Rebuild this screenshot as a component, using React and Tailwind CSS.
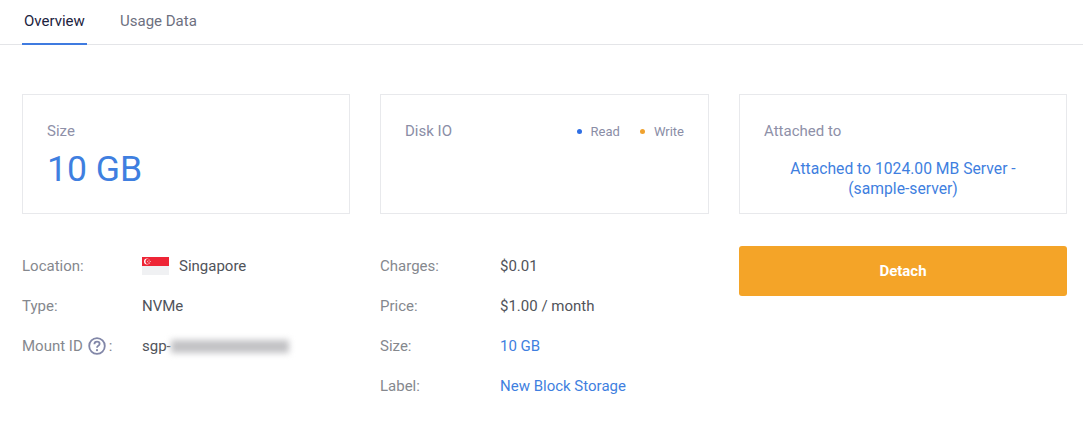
import React from 'react';

function Row({ label, children }) {
  return (
    <div className="flex h-10 items-center">
      <div className="flex w-[120px] items-center text-[#85888e]">{label}</div>
      <div className="flex items-center text-[#50535a]">{children}</div>
    </div>
  );
}

function Card({ children }) {
  return <div className="h-[120px] border border-[#e8e9ec] bg-white px-6 pt-[25px]">{children}</div>;
}

function SingaporeFlag() {
  return (
    <svg width="27" height="18" viewBox="0 0 27 18" className="mr-[10px]">
      <rect width="27" height="9" fill="#ee2536" />
      <rect y="9" width="27" height="9" fill="#f0f1f3" />
      <circle cx="5" cy="4.5" r="3" fill="#fff" />
      <circle cx="6.2" cy="4.5" r="2.7" fill="#ee2536" />
      <circle cx="7" cy="3" r="0.5" fill="#fff" />
      <circle cx="8.2" cy="4.4" r="0.5" fill="#fff" />
      <circle cx="7.6" cy="6" r="0.5" fill="#fff" />
      <circle cx="6.2" cy="6" r="0.5" fill="#fff" />
      <circle cx="5.7" cy="4.2" r="0.5" fill="#fff" />
    </svg>
  );
}

function HelpIcon() {
  return (
    <svg width="18" height="18" viewBox="0 0 18 18" className="ml-[5px] mr-[3px]" fill="none" stroke="#8287a8">
      <circle cx="9" cy="9" r="7.8" strokeWidth="1.8" />
      <path d="M6.4 7.2c0-1.5 1.2-2.5 2.6-2.5s2.6.9 2.6 2.3c0 1.9-2.6 1.8-2.6 3.7" strokeWidth="1.8" />
      <circle cx="9" cy="13.2" r="1.1" fill="#8287a8" stroke="none" />
    </svg>
  );
}

export default function App() {
  return (
    <div className="h-[430px] w-[1083px] overflow-hidden bg-white font-['Roboto',sans-serif] text-[15px]">
      {/* Tabs */}
      <div className="flex h-[45px] border-b border-[#e4e5e8] pl-[22px]">
        <div className="h-[45px] w-[65px] border-b-2 border-[#3f7be0] pt-[10px] pl-[2px] text-[#1c2340]">Overview</div>
        <div className="ml-[33px] pt-[10px] text-[#6d7080]">Usage Data</div>
      </div>

      <div className="grid grid-cols-[328px_329px_328px] gap-x-[30px] pt-[49px] pl-[22px]">
        {/* Size */}
        <Card>
          <div className="text-[#8e90a8]">Size</div>
          <div className="mt-[6px] text-[35.6px] leading-[40px] text-[#3f7fe0]">10 GB</div>
        </Card>

        {/* Disk IO */}
        <Card>
          <div className="flex items-center justify-between">
            <div className="text-[#8a8da6]">Disk IO</div>
            <div className="flex items-center text-[13px] text-[#8a8da6]">
              <span className="mr-[9px] h-[5px] w-[5px] rounded-full bg-[#2f6fe4]"></span>
              Read
              <span className="mr-[9px] ml-[20px] h-[5px] w-[5px] rounded-full bg-[#f0a22e]"></span>
              Write
            </div>
          </div>
        </Card>

        {/* Attached to */}
        <Card>
          <div className="text-[#8e90a8]">Attached to</div>
          <div className="mt-[16px] text-center text-[15.7px] leading-[20px] text-[#3f7fe0]">
            Attached to 1024.00 MB Server - <span className="whitespace-nowrap">(sample-server)</span>
          </div>
        </Card>

        {/* Location, type, mount */}
        <div className="mt-[32px]">
          <Row label="Location:">
            <SingaporeFlag />
            Singapore
          </Row>
          <Row label="Type:">NVMe</Row>
          <Row
            label={
              <>
                Mount ID
                <HelpIcon />:
              </>
            }
          >
            sgp-
            <span className="h-[13px] w-[118px] bg-[#c2c2c5] blur-[3px]"></span>
          </Row>
        </div>

        {/* Billing */}
        <div className="mt-[32px]">
          <Row label="Charges:">$0.01</Row>
          <Row label="Price:">$1.00 / month</Row>
          <Row label="Size:">
            <span className="text-[#3f7fe0]">10 GB</span>
          </Row>
          <Row label="Label:">
            <span className="text-[#3f7fe0]">New Block Storage</span>
          </Row>
        </div>

        <div className="mt-[32px]">
          <button className="h-[50px] w-full rounded-[3px] bg-[#f4a428] text-[15px] font-bold text-white">Detach</button>
        </div>
      </div>
    </div>
  );
}
